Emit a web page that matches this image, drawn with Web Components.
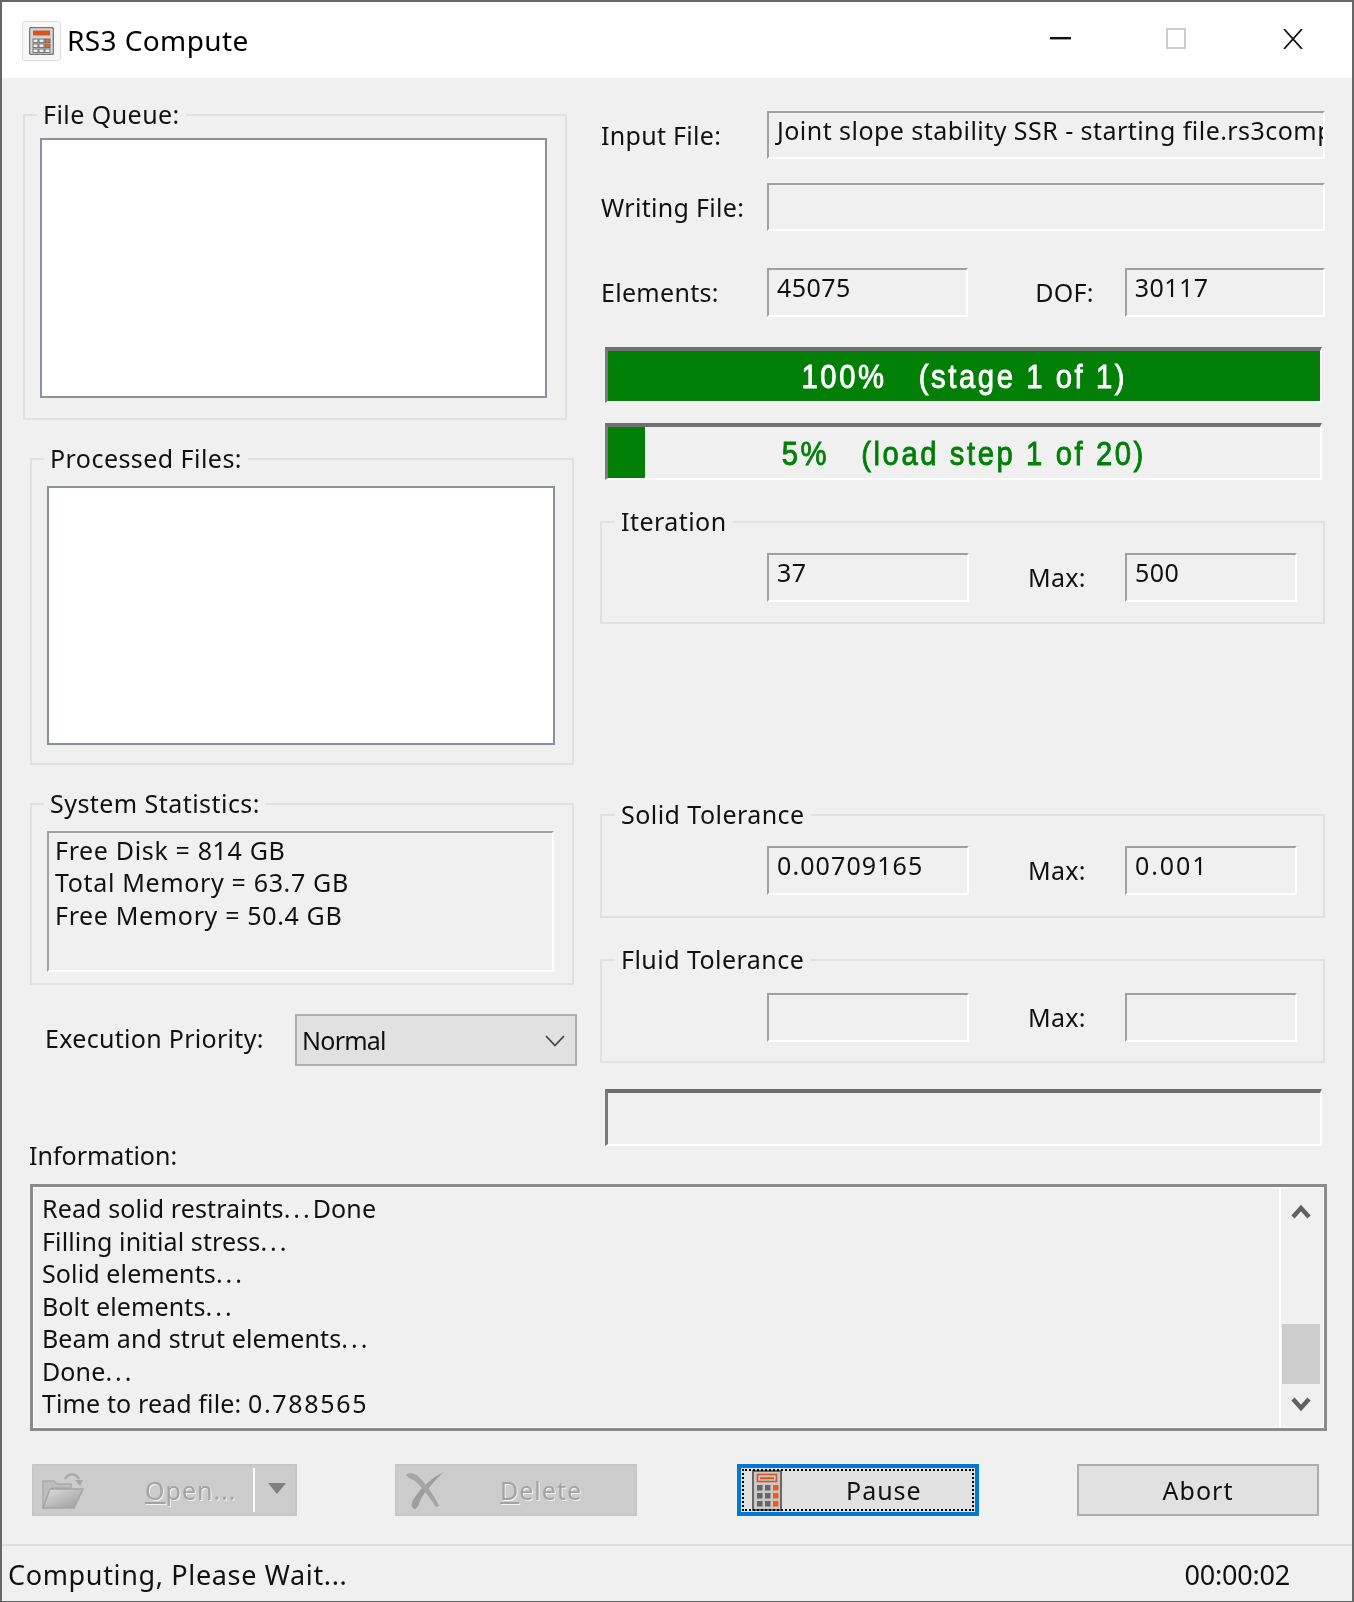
<!DOCTYPE html>
<html><head><meta charset="utf-8"><title>RS3 Compute</title>
<style>html,body{margin:0;padding:0;background:#f0f0f0}</style></head>
<body>
<rs-app></rs-app>
<script>
const FONT = `"Noto Sans","Open Sans",sans-serif`;
const def = (name, html, cls={}) => {
  customElements.define(name, class extends HTMLElement {
    constructor(){ super(); this.attachShadow({mode:'open'}).innerHTML = html; if(cls.init) cls.init.call(this); }
  });
};
const calcIcon = `<svg width="25" height="28" viewBox="0 0 25 28"><rect x=".5" y=".5" width="24" height="27" rx="2" fill="#d4d4d4" stroke="#777" stroke-width="1.4"/><rect x="4" y="3.5" width="17" height="5" fill="#d9531e"/>
${[0,1,2].map(r=>[0,1,2].map(c=>`<rect x="${4+c*6}" y="${12+r*5}" width="5" height="3.6" fill="${c==2&&r<2?'#ee6a2a':'#eee'}" stroke="#666" stroke-width=".9"/>`).join('')).join('')}</svg>`;

def('rs-titlebar', `<style>
:host{display:flex;align-items:center;height:76px;background:#fff;flex:none}
.ic{margin-left:20px;width:39px;height:40px;box-sizing:border-box;border:1px solid #dcdcdc;border-radius:3px;background:#f7f7f7;display:flex;align-items:center;justify-content:center;margin-top:1px}
.t{margin-left:6px;font:28px/1 ${FONT};letter-spacing:.4px;color:#000;flex:1}
.b{display:flex;align-items:center;margin-right:49px;gap:0;margin-top:-3px}
svg{display:block}
</style><div class="ic">${calcIcon}</div><div class="t"><slot></slot></div>
<div class="b">
<svg width="21" height="3" style="margin-right:95px"><rect width="21" height="2.4" fill="#111"/></svg>
<svg width="20" height="21" style="margin-right:97px"><rect x="1" y="1" width="18" height="19" fill="none" stroke="#ccc" stroke-width="2"/></svg>
<svg width="20" height="20"><path d="M1 0L19 20M19 0L1 20" stroke="#111" stroke-width="1.8" fill="none"/></svg>
</div>`);

def('rs-group', `<style>
:host{display:block;position:relative;box-sizing:border-box;border:2px solid #e0e0e0}
.l{position:absolute;top:-18px;left:var(--ll,14px);padding:0 6px;background:#f0f0f0;font:25px/32px ${FONT};letter-spacing:.45px;color:#111;white-space:nowrap}
</style><div class="l"></div><slot></slot>`, {init(){ this.shadowRoot.querySelector('.l').textContent=this.getAttribute('label'); }});

def('rs-list', `<style>:host{display:block;box-sizing:border-box;background:#fff;border:2px solid #8b909a}</style><slot></slot>`);

def('rs-field', `<style>
:host{display:block;box-sizing:border-box;border:2px solid;border-color:#a0a0a0 #fff #fff #a0a0a0;padding:1px 0 0 8px;font:25px/32px ${FONT};letter-spacing:.45px;color:#111;white-space:nowrap;overflow:hidden}
</style><slot></slot>`);

def('rs-label', `<style>:host{display:block;font:25px/32px ${FONT};letter-spacing:.3px;color:#111;white-space:nowrap}</style><slot></slot>`);

def('rs-progress', `<style>
:host{display:block;position:relative;box-sizing:border-box;border-style:solid;border-width:4px 2px 2px 3px;border-color:#6f6f6f #fff #fff #7a7a7a;background:#f0f0f0;overflow:hidden}
.f{position:absolute;left:0;top:0;bottom:0;background:#027f07}
.t{height:100%;display:flex;align-items:center;justify-content:center;position:relative}
span{display:inline-block;white-space:pre;font:34px/1 "Liberation Sans",sans-serif;-webkit-text-stroke:.9px currentColor;transform:scaleX(.86);transform-origin:center;letter-spacing:3px}
</style><div class="f"></div><div class="t"><span></span></div>`, {init(){
  const s=this.shadowRoot; s.querySelector('.f').style.width=this.getAttribute('fill');
  const sp=s.querySelector('span'); sp.textContent=this.getAttribute('text')||''; sp.style.color=this.getAttribute('color')||'#fff';
}});

def('rs-combo', `<style>
:host{display:flex;align-items:center;box-sizing:border-box;background:#e1e1e1;border:2px solid #adadad;font:25px/32px ${FONT};letter-spacing:-.75px;color:#111;padding:0 10px 0 5px}
.t{flex:1}svg{display:block;margin-top:2px}
</style><div class="t"><slot></slot></div><svg width="20" height="12" viewBox="0 0 20 12"><path d="M1 1L10 10.5L19 1" fill="none" stroke="#444" stroke-width="1.8"/></svg>`);

def('rs-scrollbar', `<style>
:host{display:block;box-sizing:border-box;width:44px;border-left:2px solid #fff;flex:none;position:relative}
svg{display:block;position:absolute;left:10px}
.th{position:absolute;left:1px;top:136px;width:38px;height:60px;background:#cdcdcd}
</style><svg width="20" height="15" style="top:16px" viewBox="0 0 20 15"><path d="M2 13L10 4L18 13" fill="none" stroke="#606060" stroke-width="4.4"/></svg><div class="th"></div><svg width="20" height="15" style="top:209px" viewBox="0 0 20 15"><path d="M2 2L10 11L18 2" fill="none" stroke="#606060" stroke-width="4.4"/></svg>`);

def('rs-info', `<style>
:host{display:flex;box-sizing:border-box;border:3px solid #8a8a8a;box-shadow:inset 0 0 0 1px #fff;background:#f0f0f0;padding:1px}
.t{flex:1;padding:4px 0 0 8px;font:25px/32.55px ${FONT};letter-spacing:.12px;color:#111}
</style><div class="t"><slot></slot></div><rs-scrollbar></rs-scrollbar>`);

def('rs-button', `<style>
:host{display:flex;align-items:center;box-sizing:border-box;height:52px;position:relative;background:#e1e1e1;border:2px solid #adadad;font:25px/32px ${FONT};letter-spacing:1px;color:#111}
:host([state=disabled]){background:#ccc;border-color:#c6c6c6;color:#a3a3a3;text-shadow:1px 1px 0 #f4f4f4}
:host([state=focus]){border:4px solid #0078d7}
:host([state=focus])::after{content:"";position:absolute;inset:1px;border:2px dotted #000;pointer-events:none}
.i{display:flex;flex:none;margin-left:var(--il,0)}
.t{margin-left:var(--tl,0);white-space:nowrap}
</style><div class="i"><slot name="icon"></slot></div><div class="t"><slot></slot></div><slot name="after"></slot>`);

def('rs-status', `<style>
:host{display:flex;justify-content:space-between;align-items:center;border-top:2px solid #dedede;font:27px/32px ${FONT};letter-spacing:.65px;color:#111;padding:2px 62px 0 6px;flex:1}
</style><slot></slot>`);

def('rs-window', `<style>
:host{display:flex;flex-direction:column;box-sizing:border-box;width:1354px;height:1602px;border:solid #666;border-width:2px 2px 1px 2px;background:#f0f0f0;overflow:hidden;filter:blur(.35px)}
</style><slot></slot>`);

const pauseIcon = `<svg slot="icon" width="30" height="41" viewBox="0 0 30 41"><rect x="1" y="1" width="28" height="39" fill="#c9c9c9" stroke="#666" stroke-width="2"/><rect x="5.5" y="4.5" width="19" height="7" fill="none" stroke="#d9531e" stroke-width="1.6"/><rect x="8" y="7.2" width="14" height="2" fill="#d9531e"/>
${[0,1,2].map(r=>[0,1,2].map(c=>`<rect x="${5+c*8}" y="${15+r*8}" width="5.5" height="5.5" fill="${c==2?'#ee5a0e':'#666'}"/>`).join('')).join('')}</svg>`;
const folderIcon = `<svg slot="icon" width="42" height="37" viewBox="0 0 42 37"><defs><linearGradient id="fg" x1="0" y1="0" x2="1" y2="1"><stop offset="0" stop-color="#dedede"/><stop offset="1" stop-color="#9a9a9a"/></linearGradient></defs>
<path d="M1 9H12L15 12H29V16H10L1 36Z" fill="#bdbdbd" stroke="#aaa" stroke-width="1.4"/>
<path d="M8 17H41L32 36H1Z" fill="url(#fg)" stroke="#a4a4a4" stroke-width="1.4"/>
<path d="M23 7C26 1 34 1 37 7" fill="none" stroke="#a8a8a8" stroke-width="2.4"/><path d="M33 8H41L38 14Z" fill="#a8a8a8"/></svg>`;
const xIcon = `<svg slot="icon" width="41" height="40" viewBox="0 0 41 40"><path d="M40 2C27 8 16 19 9 30C7 34 7 38 11 39C14 38 15 33 17 29C22 20 31 10 40 2Z" fill="#9d9d9d"/><path d="M2 5C4 2 12 3 15 7C22 14 30 25 35 36L32 37C26 27 18 18 11 11C8 9 4 8 2 5Z" fill="#a5a5a5"/></svg>`;

def('rs-app', `<style>
:host{display:block}
.main{display:grid;grid-template-columns:575px 1fr;height:1068px;flex:none}
.left rs-group{margin-left:28px;width:544px}
.left rs-group.q{margin-left:21px;width:544px;height:306px;margin-top:36px;padding:22px 0 0 15px;--ll:12px}
.left rs-group.q rs-list{width:507px;height:260px}
.left rs-group.p{height:307px;margin-top:38px;padding:26px 0 0 15px;--ll:12px}
.left rs-group.p rs-list{width:508px;height:259px}
.left rs-group.s{height:182px;margin-top:38px;padding:26px 0 0 15px;--ll:12px}
.left rs-group.s rs-field{width:507px;height:141px;line-height:32.4px;letter-spacing:.65px;padding-left:6px}
.prio{display:flex;align-items:center;margin-top:29px;margin-left:43px}
.prio rs-label{width:250px;margin-top:-5px}
.prio rs-combo{width:282px;height:52px}
.right{padding-left:24px;width:724px;box-sizing:content-box}
.row{display:flex;align-items:center}
.row>rs-label:first-child{width:166px;flex:none}
.r1{margin-top:33px;height:48px}.r2{margin-top:24px;height:48px}.r3{margin-top:37px;height:49px}
.row rs-field{height:100%;box-sizing:border-box}
.wide{width:560px}
.half{width:202px}
.half2{width:201px}
.dof{margin-left:67px;width:90px}
.r3 rs-label{margin-top:-2px}
.right rs-progress{margin-left:4px;width:717px}
.p1{margin-top:30px;height:56px}.p2{margin-top:20px;height:57px}.p3{margin-top:26px;height:57px}
.right rs-group{margin-left:-1px;width:725px;padding-left:165px;--ll:13px}
.g1{margin-top:41px;height:103px;padding-top:30px}
.g2{margin-top:190px;height:104px;padding-top:30px}
.g3{margin-top:41px;height:104px;padding-top:32px}
.right rs-group .row{height:49px}
.mx{margin-left:59px;width:97px;margin-top:-1px}
.short{width:172px}
.n{letter-spacing:1.1px}.n2{letter-spacing:1.9px}
.d{font-style:normal;letter-spacing:3px}
.m{font-style:normal;letter-spacing:1.7px}
.infoL{margin:-1px 0 0 27px;height:39px;line-height:20px;display:block;letter-spacing:0}
rs-info{margin-left:28px;width:1297px;height:247px;flex:none}
.btns{display:flex;margin:33px 0 0 30px;flex:none}
.b1{width:265px;--il:8px;--tl:61px}
.b2{width:242px;margin-left:98px;--il:7px;--tl:55px}
.b3{width:242px;margin-left:100px;--il:11px;--tl:64px}
.b4{width:242px;margin-left:98px;justify-content:center}
.after{display:flex;align-items:center;margin-left:16px}
rs-status{margin-top:28px}
.tm{letter-spacing:-.2px}
</style>
<rs-window>
<rs-titlebar>RS3 Compute</rs-titlebar>
<div class="main">
 <div class="left">
  <rs-group class="q" label="File Queue:"><rs-list></rs-list></rs-group>
  <rs-group class="p" label="Processed Files:"><rs-list></rs-list></rs-group>
  <rs-group class="s" label="System Statistics:"><rs-field><div>Free Disk = 814 GB</div><div>Total Memory = 63.7 GB</div><div>Free Memory = 50.4 GB</div></rs-field></rs-group>
  <div class="prio"><rs-label>Execution Priority:</rs-label><rs-combo>Normal</rs-combo></div>
 </div>
 <div class="right">
  <div class="row r1"><rs-label>Input File:</rs-label><rs-field class="wide">Joint slope stability SSR - starting file.rs3comp</rs-field></div>
  <div class="row r2"><rs-label>Writing File:</rs-label><rs-field class="wide"></rs-field></div>
  <div class="row r3"><rs-label>Elements:</rs-label><rs-field class="half">45075</rs-field><rs-label class="dof">DOF:</rs-label><rs-field class="half2">30117</rs-field></div>
  <rs-progress class="p1" fill="100%" text="100%   (stage 1 of 1)" color="#fff"></rs-progress>
  <rs-progress class="p2" fill="5.2%" text="5%   (load step 1 of 20)" color="#027f07"></rs-progress>
  <rs-group class="g1" label="Iteration"><div class="row"><rs-field class="half">37</rs-field><rs-label class="mx">Max:</rs-label><rs-field class="short">500</rs-field></div></rs-group>
  <rs-group class="g2" label="Solid Tolerance"><div class="row"><rs-field class="half n">0.00709165</rs-field><rs-label class="mx">Max:</rs-label><rs-field class="short n2">0.001</rs-field></div></rs-group>
  <rs-group class="g3" label="Fluid Tolerance"><div class="row"><rs-field class="half"></rs-field><rs-label class="mx">Max:</rs-label><rs-field class="short"></rs-field></div></rs-group>
  <rs-progress class="p3" fill="0" text=""></rs-progress>
 </div>
</div>
<rs-label class="infoL">Information:</rs-label>
<rs-info><div>Read solid restraints<i class="d">...</i>Done</div><div>Filling initial stress<i class="d">...</i></div><div>Solid elements<i class="d">...</i></div><div>Bolt elements<i class="d">...</i></div><div>Beam and strut elements<i class="d">...</i></div><div>Done<i class="d">...</i></div><div>Time to read file: <i class="m">0.788565</i></div></rs-info>
<div class="btns">
 <rs-button class="b1" state="disabled">${folderIcon}<u>O</u>pen...<div slot="after" class="after"><svg width="3" height="44"><rect width="2" height="44" fill="#fbfbfb"/></svg><svg width="18" height="11" style="margin-left:12px;margin-top:-4px"><path d="M0 0H18L9 11Z" fill="#808080"/></svg></div></rs-button>
 <rs-button class="b2" state="disabled">${xIcon}<u>D</u>elete</rs-button>
 <rs-button class="b3" state="focus">${pauseIcon}Pause</rs-button>
 <rs-button class="b4">Abort</rs-button>
</div>
<rs-status><span>Computing, Please Wait...</span><span class="tm">00:00:02</span></rs-status>
</rs-window>`);
</script>
</body></html>
